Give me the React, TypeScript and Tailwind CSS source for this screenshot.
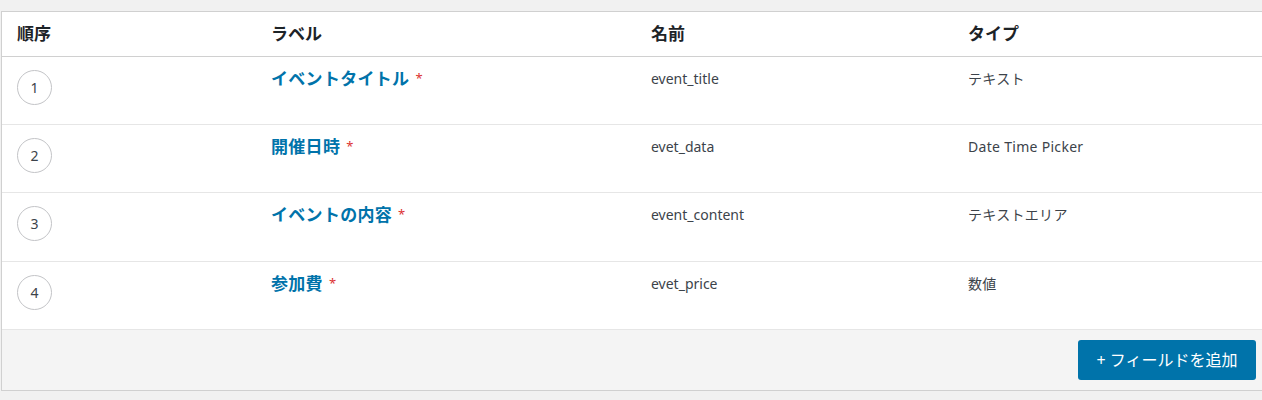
import React from "react";

type Field = {
  order: number;
  label: string;
  name: string;
  type: string;
};

const fields: Field[] = [
  { order: 1, label: "イベントタイトル", name: "event_title", type: "テキスト" },
  { order: 2, label: "開催日時", name: "evet_data", type: "Date Time Picker" },
  { order: 3, label: "イベントの内容", name: "event_content", type: "テキストエリア" },
  { order: 4, label: "参加費", name: "evet_price", type: "数値" },
];

const font = {
  fontFamily: '"Noto Sans", "Noto Sans CJK JP", sans-serif',
};

const cols = "grid grid-cols-[254px_380px_317px_1fr]";

const App: React.FC = () => {
  return (
    <div
      className="min-h-[400px] w-full overflow-hidden bg-[#f1f1f1] pt-[11px] pl-[1px]"
      style={font}
    >
      <div className="border border-r-0 border-[#d0d0d0] bg-white">
        {/* header */}
        <div className={`${cols} h-[45px] items-center border-b border-[#d0d0d0] text-[17px] font-bold text-[#1d2327]`}>
          <div className="pl-[15px]">順序</div>
          <div className="pl-[15px]">ラベル</div>
          <div className="pl-[15px]">名前</div>
          <div className="pl-[15px]">タイプ</div>
        </div>

        {/* rows */}
        {fields.map((f) => (
          <div
            key={f.order}
            className={`${cols} ${f.order === 3 ? "h-[69px]" : "h-[68px]"} border-b border-[#e6e6e6] last:border-[#d0d0d0]`}
          >
            <div className="pl-[15px] pt-[13px]">
              <div className="flex h-[35px] w-[35px] items-center justify-center rounded-full border border-[#c3c4c7] text-[14px] text-[#3c434a]">
                {f.order}
              </div>
            </div>
            <div className="flex items-start pl-[15px] pt-[10px] text-[17px] leading-[24px] font-bold tracking-[0.3px] text-[#0073aa]">
              {f.label}
              <span className="ml-[6px] pt-[2px] text-[13px] leading-[18px] font-normal text-[#dc3232]">*</span>
            </div>
            <div className="pl-[15px] pt-[12px] text-[14px] leading-[20px] text-[#3c434a]">
              {f.name}
            </div>
            <div className="pl-[15px] pt-[12px] text-[14px] leading-[20px] tracking-[0.3px] text-[#3c434a]">
              {f.type}
            </div>
          </div>
        ))}

        {/* footer */}
        <div className="flex justify-end bg-[#f4f4f4] pt-[10px] pb-[10px] pr-[6px]">
          <button className="flex h-[40px] w-[178px] items-center justify-center rounded-[3px] bg-[#0073aa] text-[16px] text-white">
            + フィールドを追加
          </button>
        </div>
      </div>
    </div>
  );
};

export default App;
